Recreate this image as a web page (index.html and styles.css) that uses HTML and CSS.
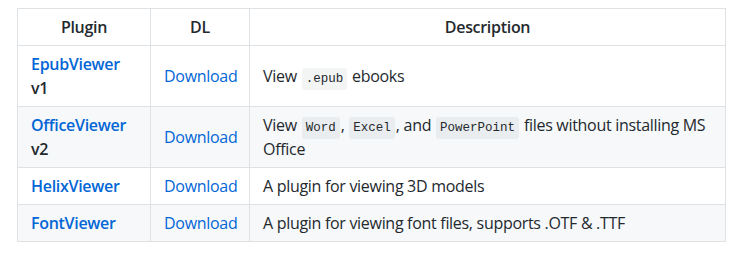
FILE: index.html
```html
<!DOCTYPE html>
<html>
<head>
<meta charset="utf-8">
<link rel="stylesheet" href="styles.css">
</head>
<body>
<div class="page">
<table class="plugins">
  <colgroup>
    <col class="c-plugin">
    <col class="c-dl">
    <col class="c-desc">
  </colgroup>
  <thead>
    <tr><th>Plugin</th><th>DL</th><th>Description</th></tr>
  </thead>
  <tbody>
    <tr>
      <td><strong><a href="#">EpubViewer</a> v1</strong></td>
      <td class="center"><a href="#">Download</a></td>
      <td>View <code>.epub</code> ebooks</td>
    </tr>
    <tr>
      <td><strong><a href="#">OfficeViewer</a> v2</strong></td>
      <td class="center"><a href="#">Download</a></td>
      <td>View <code>Word</code>, <code>Excel</code>, and <code>PowerPoint</code> files without installing MS Office</td>
    </tr>
    <tr>
      <td><strong><a href="#">HelixViewer</a></strong></td>
      <td class="center"><a href="#">Download</a></td>
      <td>A plugin for viewing 3D models</td>
    </tr>
    <tr>
      <td><strong><a href="#">FontViewer</a></strong></td>
      <td class="center"><a href="#">Download</a></td>
      <td>A plugin for viewing font files, supports .OTF &amp; .TTF</td>
    </tr>
  </tbody>
</table>
</div>
</body>
</html>
```
FILE: styles.css
```css
html, body {
  margin: 0;
  padding: 0;
  background: #ffffff;
}
.page {
  padding: 8px 0 0 17px;
  font-family: "Open Sans", "Noto Sans", sans-serif;
  font-size: 16px;
  line-height: 24px;
  letter-spacing: -0.3px;
  color: #24292e;
}
.plugins {
  border-collapse: collapse;
  border-spacing: 0;
  width: 709px;
  table-layout: fixed;
}
.c-plugin { width: 133px; }
.c-dl { width: 99px; }
.plugins th,
.plugins td {
  border: 1px solid #dfe2e5;
  padding: 6px 13px;
  vertical-align: middle;
}
.plugins th {
  font-weight: 600;
  text-align: center;
}
.plugins td { text-align: left; }
.plugins td.center { text-align: center; }
.plugins tbody tr:nth-child(2n) { background: #f6f8fa; }
.plugins a {
  color: #0366d6;
  text-decoration: none;
}
.plugins strong { font-weight: 600; }
.plugins code {
  font-family: "Liberation Mono", "DejaVu Sans Mono", monospace;
  font-size: 12.5px;
  line-height: 1;
  letter-spacing: 0;
  margin: 0 1px;
  padding: 4px 4px;
  background: rgba(27, 31, 35, 0.05);
  border-radius: 3px;
}
```
